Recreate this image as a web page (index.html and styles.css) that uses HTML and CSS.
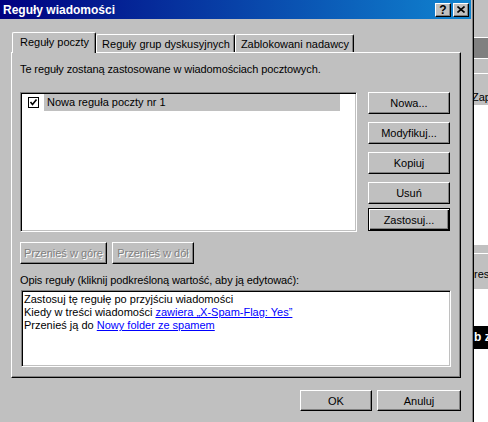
FILE: index.html
```html
<!DOCTYPE html>
<html lang="pl">
<head>
    <meta charset="UTF-8">
    <title>Reguły wiadomości</title>
    <link rel="stylesheet" href="styles.css">
</head>
<body>
    <div class="screen">
        <div class="dialog">
            <div class="titlebar">
                <span class="title">Reguły wiadomości</span>
                <div class="caption-btns">
                    <span class="cap-btn cap-help">?</span>
                    <span class="cap-btn">
                        <svg width="8" height="7" viewBox="0 0 8 7"><path d="M0.5 0.5 L7.5 6.5 M7.5 0.5 L0.5 6.5" stroke="#000" stroke-width="1.6" fill="none"/></svg>
                    </span>
                </div>
            </div>

            <div class="content">
                <div class="tabs">
                    <div class="tab active">Reguły poczty</div>
                    <div class="tab">Reguły grup dyskusyjnych</div>
                    <div class="tab">Zablokowani nadawcy</div>
                </div>

                <div class="panel">
                    <p class="hint">Te reguły zostaną zastosowane w wiadomościach pocztowych.</p>

                    <div class="rules-row">
                        <div class="listbox sunken">
                            <div class="rule-item">
                                <span class="check">
                                    <svg width="9" height="9" viewBox="0 0 9 9"><path d="M1.5 4 L3.5 6.5 L7.5 1.5" stroke="#000" stroke-width="1.6" fill="none"/></svg>
                                </span>
                                <span class="rule-name">Nowa reguła poczty nr 1</span>
                            </div>
                        </div>
                        <div class="side-btns">
                            <button class="btn">Nowa...</button>
                            <button class="btn">Modyfikuj...</button>
                            <button class="btn">Kopiuj</button>
                            <button class="btn">Usuń</button>
                            <button class="btn btn-default">Zastosuj...</button>
                        </div>
                    </div>

                    <div class="move-btns">
                        <button class="btn btn-up" disabled>Przenieś w górę</button>
                        <button class="btn btn-down" disabled>Przenieś w dół</button>
                    </div>

                    <p class="desc-label">Opis reguły (kliknij podkreśloną wartość, aby ją edytować):</p>
                    <div class="desc sunken">
                        <div>Zastosuj tę regułę po przyjściu wiadomości</div>
                        <div>Kiedy w treści wiadomości <a href="#">zawiera „X-Spam-Flag: Yes”</a></div>
                        <div>Przenieś ją do <a href="#">Nowy folder ze spamem</a></div>
                    </div>
                </div>

                <div class="footer">
                    <button class="btn btn-ok">OK</button>
                    <button class="btn btn-cancel">Anuluj</button>
                </div>
            </div>
        </div>

        <!-- window behind the dialog -->
        <div class="behind">
            <div class="bh-gray" style="height: 37px"></div>
            <div class="bh-line"></div>
            <div class="bh-dark" style="height: 20px"></div>
            <div class="bh-line"></div>
            <div class="bh-gray" style="height: 14px"></div>
            <div class="bh-line"></div>
            <div class="bh-header">Zap</div>
            <div class="bh-white" style="height: 140px"></div>
            <div class="bh-gray" style="height: 8px"></div>
            <div class="bh-line"></div>
            <div class="bh-row">res</div>
            <div class="bh-white" style="height: 37px"></div>
            <div class="bh-black">b z</div>
            <div class="bh-white" style="height: 69px"></div>
        </div>
    </div>
</body>
</html>
```

FILE: styles.css
```css
* {
    box-sizing: border-box;
}
body {
    margin: 0;
    font-family: "Liberation Sans", Arial, sans-serif;
    font-size: 11px;
    color: #000;
    background: #fff;
}
.screen {
    display: flex;
    width: 488px;
    height: 422px;
    overflow: hidden;
}
.dialog {
    width: 474px;
    height: 422px;
    flex: none;
    background: #c0c0c0;
    border-right: 1px solid #000;
    box-shadow: inset -1px 0 #808080;
    padding-right: 2px;
}

/* title bar */
.titlebar {
    height: 19px;
    background: linear-gradient(to right, #000080, #1084d0);
    display: flex;
    align-items: center;
    justify-content: space-between;
    padding: 0 2px 0 3px;
}
.title {
    color: #fff;
    font-weight: bold;
    font-size: 12px;
}
.caption-btns {
    display: flex;
    gap: 2px;
}
.cap-btn {
    width: 16px;
    height: 14px;
    background: #c0c0c0;
    border: 1px solid;
    border-color: #fff #000 #000 #fff;
    box-shadow: inset -1px -1px #808080;
    display: flex;
    align-items: center;
    justify-content: center;
}
.cap-help {
    font-weight: bold;
    font-size: 12px;
    line-height: 12px;
}

.content {
    padding: 13px 10px 0 11px;
}

/* tabs */
.tabs {
    display: flex;
    align-items: flex-end;
    padding-left: 1px;
    height: 20px;
}
.tab {
    height: 18px;
    padding: 3px 4px 0 5px;
    background: #c0c0c0;
    border-top: 1px solid #fff;
    border-left: 1px solid #fff;
    border-right: 1px solid #000;
    border-top-left-radius: 2px;
    border-top-right-radius: 2px;
    box-shadow: inset -1px 0 #808080;
    white-space: nowrap;
}
.tab.active {
    height: 21px;
    padding: 3px 6px 0 7px;
    margin-bottom: -1px;
    position: relative;
    z-index: 1;
}

/* panel */
.panel {
    width: 450px;
    height: 326px;
    border: 1px solid;
    border-color: #fff #000 #000 #fff;
    box-shadow: inset -1px -1px #808080;
    padding: 10px 9px 0 8px;
}
.hint,
.desc-label {
    margin: 0;
    line-height: 13px;
    letter-spacing: -0.1px;
}
.rules-row {
    display: flex;
    margin-top: 16px;
    height: 140px;
}
.sunken {
    background: #fff;
    border: 1px solid;
    border-color: #808080 #fff #fff #808080;
    box-shadow: inset 1px 1px #000, inset -1px -1px #c0c0c0;
}
.listbox {
    width: 337px;
    height: 140px;
    padding: 1px;
}
.rule-item {
    display: flex;
    align-items: center;
    height: 17px;
}
.check {
    width: 11px;
    height: 11px;
    margin-left: 6px;
    margin-right: 5px;
    border: 1px solid #000;
    background: #fff;
    display: flex;
    align-items: center;
    justify-content: center;
}
.rule-name {
    width: 296px;
    height: 17px;
    line-height: 17px;
    padding-left: 3px;
    background: #c0c0c0;
}
.side-btns {
    display: flex;
    flex-direction: column;
    gap: 8px;
    margin-left: 11px;
    width: 82px;
}

/* buttons */
.btn {
    font: inherit;
    color: #000;
    background: #c0c0c0;
    border: 1px solid;
    border-color: #fff #000 #000 #fff;
    box-shadow: inset -1px -1px #808080;
    padding: 0;
    height: 22px;
    border-radius: 0;
}
.btn:disabled {
    color: #808080;
    text-shadow: 1px 1px #fff;
}
.btn-default {
    height: 23px;
    margin-top: -4px;
    border-color: #000;
    box-shadow: inset 1px 1px #fff, inset -1px -1px #000, inset -2px -2px #808080;
}
.move-btns {
    display: flex;
    gap: 5px;
    margin-top: 10px;
}
.btn-up {
    width: 87px;
}
.btn-down {
    width: 82px;
}
.desc-label {
    margin-top: 10px;
}
.desc {
    width: 430px;
    height: 77px;
    margin: 3px 0 0 1px;
    padding: 2px 2px 0 2px;
    line-height: 13px;
}
.desc a {
    color: #0000ff;
}

.footer {
    display: flex;
    justify-content: flex-end;
    gap: 5px;
    width: 450px;
    margin-top: 12px;
}
.btn-ok {
    width: 72px;
    height: 21px;
}
.btn-cancel {
    width: 84px;
    height: 21px;
}

/* the window behind */
.behind {
    flex: 1;
    overflow: hidden;
    white-space: nowrap;
}
.bh-gray {
    background: #c0c0c0;
}
.bh-dark {
    background: #808080;
}
.bh-white {
    background: #fff;
}
.bh-line {
    height: 1px;
    background: #fff;
}
.bh-header {
    height: 31px;
    background: #c0c0c0;
    padding-top: 17px;
    line-height: 13px;
    text-indent: -2px;
}
.bh-row {
    height: 35px;
    background: #c0c0c0;
    padding-top: 14px;
    line-height: 13px;
}
.bh-black {
    height: 23px;
    background: #000;
    color: #fff;
    font-weight: bold;
    font-size: 12px;
    line-height: 23px;
}
```
